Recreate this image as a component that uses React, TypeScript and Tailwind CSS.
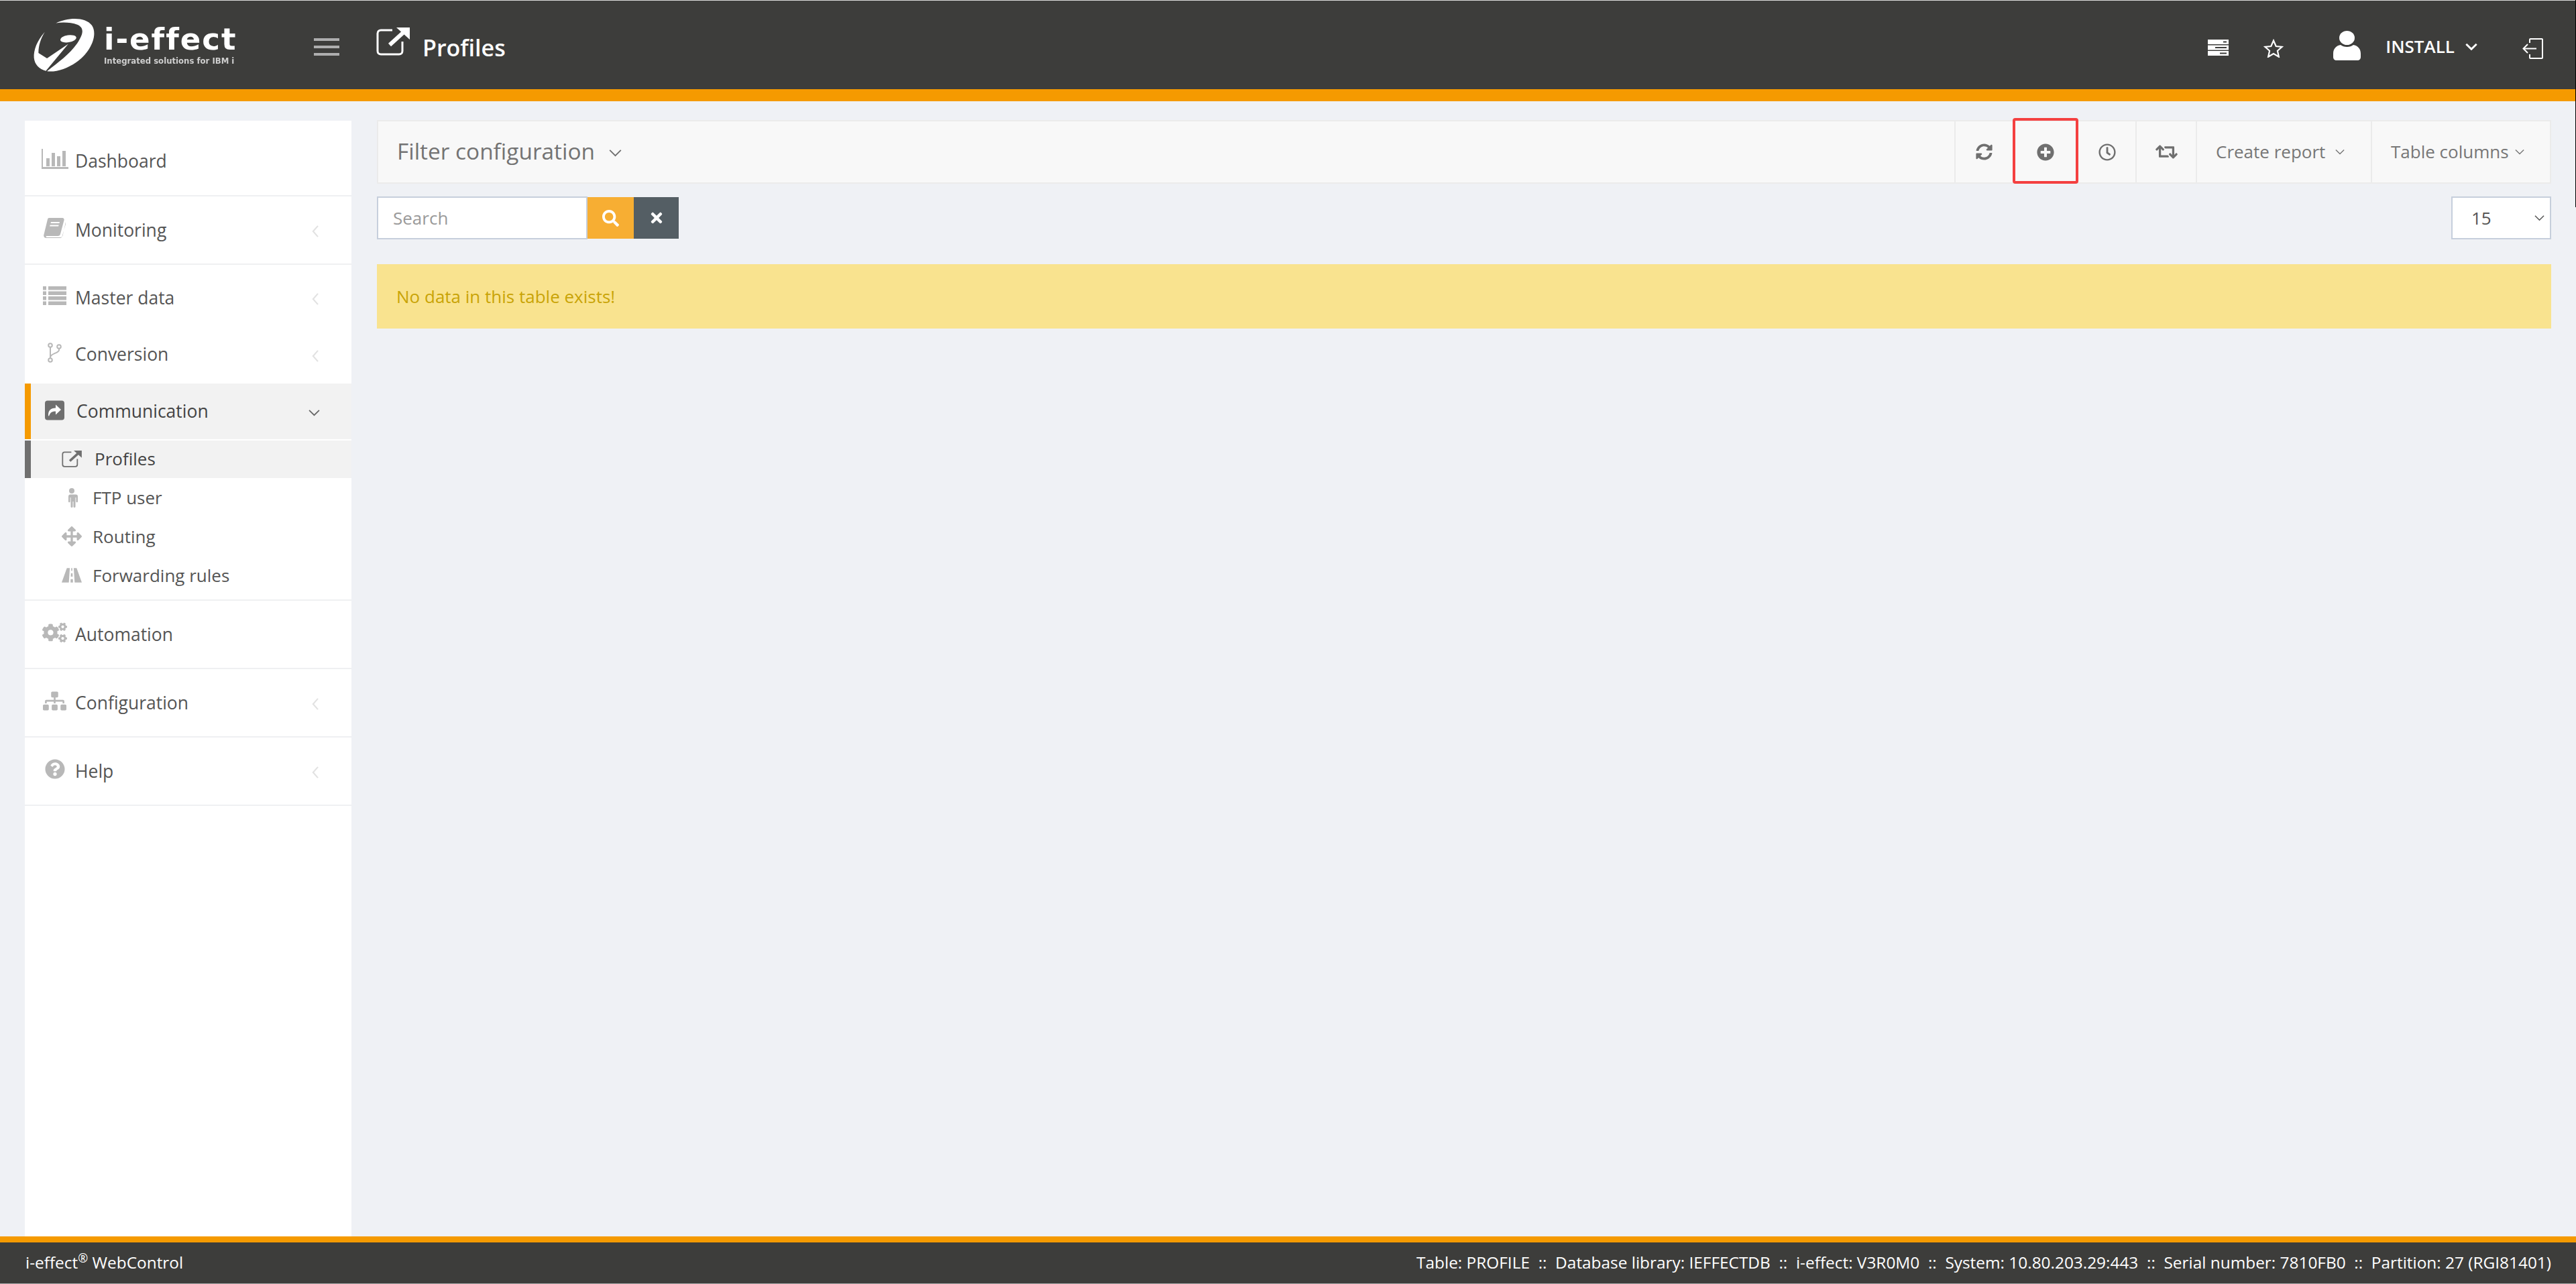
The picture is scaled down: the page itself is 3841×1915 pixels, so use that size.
import type { ReactNode } from "react";
import {
  FaArrowsAlt,
  FaCogs,
  FaSitemap,
  FaQuestionCircle,
  FaSyncAlt,
  FaPlusCircle,
  FaRegClock,
  FaRetweet,
  FaSearch,
  FaTimes,
} from "react-icons/fa";

const Chevron = ({ className }: { className: string }) => (
  <svg className={className} viewBox="0 0 16 10" fill="none" stroke="currentColor" strokeWidth={1.6}>
    <path d="M1 1.5l7 7 7-7" />
  </svg>
);

const ChevronLeft = () => (
  <svg className="w-[10px] h-[18px] mt-[4px] text-[#e2e2e2]" viewBox="0 0 11 20" fill="none" stroke="currentColor" strokeWidth={2.4}>
    <path d="M10 1L2 10l8 9" />
  </svg>
);

const BarChartIcon = () => (
  <svg className="w-[40px] h-[30px]" viewBox="0 0 40 30" fill="#b8b8b8">
    <path d="M0 0h2v27h38v3H0z" />
    <path d="M7 14h5v12H7zM15 6h5v20h-5zM23 11h5v15h-5zM31 3h5v23h-5z" />
  </svg>
);

const BookIcon = () => (
  <svg className="w-[33px] h-[30px]" viewBox="0 0 33 30" fill="#b8b8b8">
    <path d="M8 0h20c2 0 3 1.5 2.500 3.500L25 24c-.5 2-1.500 3-4 3H5c-2 0-2 2 0 2h20c2 0 3-1 3.500-2.500L33 6v3l-5.500 19c-.5 1.300-1.500 2-3 2H4c-3 0-4.500-2.500-3.500-5.500L6 2c.3-1.200 1-2 2-2z" />
    <path d="M11 6h13l-.6 2H10.400zM9.700 10.500h13l-.6 2h-13z" fill="#fff" />
  </svg>
);

const RowsIcon = () => (
  <svg className="w-[35px] h-[28px]" viewBox="0 0 35 28" fill="#b8b8b8">
    <path d="M0 0h5v5.500H0zM8 0h27v5.500H8zM0 7.500h5V13H0zM8 7.500h27V13H8zM0 15h5v5.500H0zM8 15h27v5.500H8zM0 22.500h5V28H0zM8 22.500h27V28H8z" />
  </svg>
);

const ForkIcon = () => (
  <svg className="w-[21px] h-[30px]" viewBox="0 0 21 30" fill="none" stroke="#b8b8b8" strokeWidth={2}>
    <circle cx="4" cy="4" r="2.800" />
    <circle cx="4" cy="26" r="2.800" />
    <circle cx="17" cy="6" r="2.800" />
    <path d="M4 7v16M17 9v2c0 5-13 5-13 11" />
  </svg>
);

const ExternalIcon = ({ className, arrow }: { className: string; arrow: number }) => (
  <svg className={className} viewBox="0 0 50 42" fill="none" stroke="currentColor">
    <path d="M24 4H7C4 4 2 6 2 9v26c0 3 2 5 5 5h27c3 0 5-2 5-5V21" strokeWidth={3} />
    <path d="M20 26L42 6" strokeWidth={arrow} />
    <path d="M30 0h20v18z" fill="currentColor" stroke="none" />
  </svg>
);

const ShareIcon = () => (
  <svg className="w-[29px] h-[30px] mr-[18px] -mt-[4px]" viewBox="0 0 29 29">
    <rect width="29" height="29" rx="4" fill="#6f6f6f" />
    <path d="M5 22c0-7 3-11 11-11V6l8 7.500-8 7.500v-5c-5 0-8 1.500-9.500 6-.5 1.300-1.500 1.300-1.500 0z" fill="#fff" />
  </svg>
);

const MaleIcon = () => (
  <svg className="w-[18px] h-[29px]" viewBox="0 0 18 29" fill="#b8b8b8">
    <circle cx="9" cy="4" r="4" />
    <path d="M3 9.500h12a3 3 0 0 1 3 3v7.500a1.300 1.300 0 0 1-2.600 0V14h-.9v13.500a1.500 1.500 0 0 1-3 0V20h-1v7.500a1.500 1.500 0 0 1-3 0V14h-.9v6a1.300 1.300 0 0 1-2.600 0v-7.500a3 3 0 0 1 3-3z" />
  </svg>
);

const RoadIcon = () => (
  <svg className="w-[31px] h-[22px]" viewBox="0 0 31 22" fill="#b8b8b8">
    <path d="M8 0h4.500L11 22H0zM18.500 0H23l8 22H20zM14.700 0h1.600l.1 4h-1.800zM14.300 8h2.400l.2 5h-2.800zM13.800 17h3.400l.2 5h-3.800z" />
  </svg>
);

const Logo = () => (
  <div className="flex items-start gap-[13px] blur-[0.4px]">
    <svg className="w-[92px] h-[82px]" viewBox="90 50 275 245" fill="#fff">
      <path d="M190 75C240 50 320 45 350 85C380 130 340 210 280 250C240 278 190 295 150 290C200 250 250 215 285 165C315 120 315 95 285 82C260 72 220 70 190 75Z" />
      <ellipse cx="245" cy="145" rx="36" ry="16" transform="rotate(-8 245 145)" />
      <path d="M140 115C105 155 90 195 92 230C95 260 115 280 145 288L245 168L150 232L112 208C112 175 122 145 140 115Z" />
    </svg>
    <div className="flex flex-col mt-[10px] w-[200px]">
      <div className="h-[44px] flex items-center font-['DejaVu_Sans'] font-bold text-[45px] text-white leading-none tracking-[2px] whitespace-nowrap">
        i-effect
      </div>
      <div className="mt-[5px] text-[11.7px] leading-[12px] text-[#cfcfcf] font-['DejaVu_Sans'] font-bold whitespace-nowrap">
        Integrated solutions for IBM i
      </div>
    </div>
  </div>
);

function NavItem({ icon, label, arrow, h, border }: { icon: ReactNode; label: string; arrow?: boolean; h: string; border?: boolean }) {
  return (
    <div className={`${h} ${border ? "border-b-2 border-[#eff0f2]" : ""} flex items-center pl-[25px] pr-[49px]`}>
      <span className="w-[41px] flex justify-center items-center shrink-0 -ml-[1px] mr-[10px] -mt-[6px]">{icon}</span>
      <span className="flex-1 text-[#555] leading-none">{label}</span>
      {arrow && <ChevronLeft />}
    </div>
  );
}

function SubItem({ icon, label }: { icon: ReactNode; label: string }) {
  return (
    <div className="h-[58px] flex items-center pl-[55px] text-[#555] text-[26px]">
      <span className="w-[30px] mr-[16px] flex justify-center shrink-0">{icon}</span>
      {label}
    </div>
  );
}

function ToolIcon({ w, icon, boxed }: { w: string; icon: ReactNode; boxed?: boolean }) {
  return <div className={`${w} ${boxed ? "" : "border-l-2 border-[#ebebeb]"} h-full flex items-center justify-center text-[#6f6f6f] text-[26px]`}>{icon}</div>;
}

export default function App() {
  return (
    <div className="relative h-[1915px] flex flex-col overflow-hidden bg-[#eff1f5] font-['Open_Sans','Liberation_Sans',sans-serif]">
      <div className="absolute right-0 top-0 w-[1px] h-[309px] bg-black" />
      {/* header */}
      <header className="h-[151px] shrink-0 border-t-[1px] border-t-[#dcdcdc] border-b-[18px] border-b-[#f59a00] bg-[#3d3d3b] flex items-center pl-[50px] pr-[49px] text-white">
        <Logo />
        <div className="ml-[113px] mt-[6px] w-[38px] flex flex-col gap-[7px]">
          <div className="h-[4px] bg-[#aeaeae]" />
          <div className="h-[4px] bg-[#aeaeae]" />
          <div className="h-[4px] bg-[#aeaeae]" />
        </div>
        <ExternalIcon className="ml-[55px] w-[50px] h-[42px] -mt-[10px] text-white" arrow={6} />
        <span className="ml-[19px] mt-[8px] text-[34px] font-semibold leading-none">Profiles</span>
        <div className="ml-auto mt-[6px] flex items-center">
          <svg className="w-[31px] h-[24px] mt-[2px]" viewBox="0 0 31 24" fill="#fff">
            <path fillRule="evenodd" d="M0 0h31v7H0zM23 2.500v2h5v-2zM0 8.500h31v7H0zM11 11v2h17v-2zM0 17h31v7H0zM18 19.500v2h10v-2z" />
          </svg>
          <svg className="ml-[52px] w-[30px] h-[28px] mt-[3px]" viewBox="0 0 30 28" fill="none" stroke="#fff" strokeWidth={2.2}>
            <path d="M15 2.500l3.700 8.500 9 .8-6.800 6 2 9L15 22.100 7.100 26.800l2-9-6.800-6 9-.8z" />
          </svg>
          <svg className="ml-[74px] w-[41px] h-[44px] -mt-[4px]" viewBox="0 0 41 44" fill="#fff">
            <ellipse cx="20.500" cy="10.500" rx="11.500" ry="10.500" />
            <path d="M11 21c5 4 14 4 19 0 6 1 11 5 11 13v5c0 3-2 5-5 5H5c-3 0-5-2-5-5v-5c0-8 5-12 11-13z" />
          </svg>
          <span className="ml-[37px] -mt-[2px] text-[26px] font-semibold leading-none">INSTALL</span>
          <Chevron className="ml-[16px] -mt-[2px] w-[18px] h-[11px] [&_path]:stroke-[2.6]" />
          <svg className="ml-[67px] mt-[4px] w-[31px] h-[31px]" viewBox="0 0 31 31" fill="none" stroke="#fff" strokeWidth={2}>
            <path d="M11 7V2c0-.6.400-1 1-1h17c.6 0 1 .4 1 1v27c0 .6-.4 1-1 1H12c-.6 0-1-.4-1-1v-5" />
            <path d="M21 15.500H2M8 9l-6.500 6.500L8 22" />
          </svg>
        </div>
      </header>

      <div className="flex-1 flex min-h-0 pl-[37px] pr-[37px]">
        {/* sidebar */}
        <aside className="w-[487px] shrink-0 mt-[29px] bg-white text-[26.5px]">
          <NavItem icon={<BarChartIcon />} label="Dashboard" h="h-[113px] pt-[9px]" border />
          <NavItem icon={<BookIcon />} label="Monitoring" arrow h="h-[102px]" border />
          <NavItem icon={<RowsIcon />} label="Master data" arrow h="h-[93px] pt-[5px]" />
          <NavItem icon={<ForkIcon />} label="Conversion" arrow h="h-[84px] pb-[3px]" />
          <div className="h-[83px] bg-[#f2f2f2] border-l-[9px] border-[#f59a00] flex items-center pl-[21px] pr-[47px] text-[#444]">
            <ShareIcon />
            <span className="flex-1 leading-none">Communication</span>
            <Chevron className="w-[17px] h-[11px] text-[#666] mt-[4px]" />
          </div>
          <div className="h-[2px] bg-white" />
          <div className="h-[56px] bg-[#f2f2f2] border-l-[9px] border-[#6f6f6f] flex items-center pl-[46px] text-[26px] text-[#444]">
            <ExternalIcon className="w-[30px] h-[25px] text-[#6f6f6f] -mt-[2px]" arrow={6} />
            <span className="ml-[19px] -mt-[2px]">Profiles</span>
          </div>
          <SubItem icon={<MaleIcon />} label="FTP user" />
          <SubItem icon={<FaArrowsAlt className="text-[30px] text-[#b8b8b8]" />} label="Routing" />
          <SubItem icon={<RoadIcon />} label="Forwarding rules" />
          <div className="h-[10px] border-b-2 border-[#eff0f2] -mt-[1px]" />
          <NavItem icon={<FaCogs className="text-[37px] text-[#b8b8b8]" />} label="Automation" h="h-[102px]" border />
          <NavItem icon={<FaSitemap className="text-[35px] text-[#b8b8b8]" />} label="Configuration" arrow h="h-[102px]" border />
          <NavItem icon={<FaQuestionCircle className="text-[30px] text-[#b8b8b8]" />} label="Help" arrow h="h-[102px]" border />
        </aside>

        {/* content */}
        <main className="flex-1 min-w-0 ml-[38px] mt-[28px]">
          <div className="h-[95px] bg-[#f8f8f8] border-2 border-[#ebebeb] flex items-center pl-[28px]">
            <span className="text-[33.4px] text-[#737373] leading-none -mt-[1px]">Filter configuration</span>
            <Chevron className="ml-[21px] w-[19px] h-[12px] mt-[2px] text-[#6f6f6f]" />
            <div className="ml-auto h-full flex items-center">
              <ToolIcon w="w-[87px]" icon={<FaSyncAlt className="text-[25px]" />} />
              <div className="relative h-full">
                <div className="w-[98px] h-full flex items-center justify-center text-[#6f6f6f]">
                  <FaPlusCircle className="text-[26px]" />
                </div>
                <div className="absolute left-0 -top-[5px] w-[98px] h-[98px] border-[4px] border-[#f44040] rounded-[4px]" />
              </div>
              <ToolIcon w="w-[85px]" boxed icon={<FaRegClock className="text-[26px]" />} />
              <ToolIcon w="w-[90px]" icon={<FaRetweet className="text-[33px]" />} />
              <div className="w-[261px] h-full border-l-2 border-[#ebebeb] flex items-center pl-[28px] text-[26px] text-[#777]">
                Create report
                <Chevron className="ml-[15px] w-[14px] h-[9px]" />
              </div>
              <div className="flex-1 w-[267px] h-full border-l-2 border-[#ebebeb] flex items-center pl-[28px] text-[26px] text-[#777] whitespace-nowrap">
                Table columns
                <Chevron className="ml-[9px] w-[14px] h-[9px]" />
              </div>
            </div>
          </div>

          <div className="mt-[19px] flex items-center justify-between">
            <div className="flex items-center">
              <div className="w-[314px] h-[64px] bg-white border-2 border-[#c6cfdc] flex items-center pl-[22px] text-[26px] text-[#9a9a9a]">
                Search
              </div>
              <div className="w-[69px] h-[62px] bg-[#f7ae33] flex items-center justify-center text-white">
                <FaSearch className="text-[25px]" />
              </div>
              <div className="w-[67px] h-[62px] bg-[#545e64] flex items-center justify-center text-white">
                <FaTimes className="text-[24px]" />
              </div>
            </div>
            <div className="w-[149px] h-[64px] bg-white border-2 border-[#c6cfdc] flex items-center justify-between pl-[28px] pr-[8px] text-[26px] text-[#555]">
              15
              <Chevron className="w-[15px] h-[10px]" />
            </div>
          </div>

          <div className="mt-[37px] h-[96px] bg-[#f9e38f] flex items-center pl-[29px] text-[26px] text-[#c9a407]">
            No data in this table exists!
          </div>
        </main>
      </div>

      {/* footer */}
      <footer className="h-[71px] shrink-0 border-t-[9px] border-t-[#f59a00] border-b-[1px] border-b-[#a8a8a8] bg-[#3d3d3b] flex items-center justify-between pl-[38px] pr-[37px] text-white text-[24.4px] whitespace-pre">
        <span>
          i-effect<sup className="text-[18px]">®</sup> WebControl
        </span>
        <span>Table: PROFILE  ::  Database library: IEFFECTDB  ::  i-effect: V3R0M0  ::  System: 10.80.203.29:443  ::  Serial number: 7810FB0  ::  Partition: 27 (RGI81401)</span>
      </footer>
    </div>
  );
}
